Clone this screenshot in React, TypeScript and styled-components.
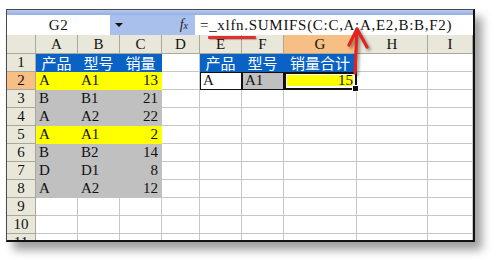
import React from 'react';
import styled, { createGlobalStyle, css } from 'styled-components';

const CELL_FONT = `"Liberation Serif", "Noto Sans CJK SC", serif`;

const COLS = ['A', 'B', 'C', 'D', 'E', 'F', 'G', 'H', 'I'];
const COL_WIDTHS = [42, 42, 42, 38, 42, 42, 73, 71, 45];
const ACTIVE_COL = 'G';
const ACTIVE_ROW = 2;

type Fill = 'blue' | 'yellow' | 'gray' | 'white' | 'none';
type Align = 'left' | 'center' | 'right';

type CellData = {
	text?: string;
	fill?: Fill;
	align?: Align;
	boxed?: boolean;
	active?: boolean;
};

const head = (text: string): CellData => ({ text, fill: 'blue', align: 'center' });
const rec = (p: string, m: string, n: string, fill: Fill): CellData[] => [
	{ text: p, fill },
	{ text: m, fill },
	{ text: n, fill, align: 'right' },
];

const ROWS: CellData[][] = [
	[head('产品'), head('型号'), head('销量'), {}, head('产品'), head('型号'), head('销量合计')],
	[
		...rec('A', 'A1', '13', 'yellow'),
		{},
		{ text: 'A', fill: 'white', boxed: true },
		{ text: 'A1', fill: 'gray', boxed: true },
		{ text: '15', fill: 'yellow', align: 'right', active: true },
	],
	rec('B', 'B1', '21', 'gray'),
	rec('A', 'A2', '22', 'gray'),
	rec('A', 'A1', '2', 'yellow'),
	rec('B', 'B2', '14', 'gray'),
	rec('D', 'D1', '8', 'gray'),
	rec('A', 'A2', '12', 'gray'),
	[],
	[],
	[],
];

const FILLS: Record<Fill, string> = {
	blue: '#0a62c4',
	yellow: '#ffff00',
	gray: '#c0c0c0',
	white: '#ffffff',
	none: '#ffffff',
};

const GlobalStyle = createGlobalStyle`
	html, body {
		margin: 0;
		padding: 0;
		background: #ffffff;
	}
`;

const Stage = styled.div`
	position: relative;
	width: 496px;
	height: 260px;
	padding: 9px 0 0 6px;
	box-sizing: border-box;
	overflow: hidden;
`;

const Window = styled.div`
	width: 469px;
	height: 233px;
	box-sizing: border-box;
	border-top: 1px solid #4a4a4a;
	border-left: 1px solid #4a4a4a;
	border-right: 2px solid #111111;
	border-bottom: 2px solid #111111;
	background: #ffffff;
	overflow: hidden;
	box-shadow: 7px 8px 9px rgba(0, 0, 0, 0.38);
	display: flex;
	flex-direction: column;
`;

const ToolStrip = styled.div`
	height: 5px;
	flex: none;
	background: linear-gradient(#b7c9ee, #94afe2);
`;

const FormulaBar = styled.div`
	height: 20px;
	flex: none;
	display: flex;
	align-items: stretch;
	font-family: ${CELL_FONT};
	font-size: 15px;
	color: #111111;
`;

const NameBox = styled.div`
	width: 103px;
	display: flex;
	align-items: center;
	justify-content: center;
	letter-spacing: 0.5px;
	background: #ffffff;
`;

const ButtonStrip = styled.div`
	width: 85px;
	display: flex;
	align-items: center;
	justify-content: space-between;
	padding: 0 7px 0 5px;
	box-sizing: border-box;
	background: #aac0ec;
`;

const DropArrow = styled.span`
	width: 0;
	height: 0;
	border-left: 4px solid transparent;
	border-right: 4px solid transparent;
	border-top: 4px solid #111111;
`;

const FxLabel = styled.span`
	font-style: italic;
	font-size: 14px;
	color: #222222;

	small {
		font-size: 10px;
	}
`;

const FormulaInput = styled.div`
	flex: 1;
	display: flex;
	align-items: center;
	padding-left: 5px;
	letter-spacing: 0.7px;
	background: #ffffff;
	white-space: nowrap;
`;

const Sheet = styled.div`
	flex: 1;
	display: grid;
	grid-template-columns: 29px ${COL_WIDTHS.map(w => `${w}px`).join(' ')};
	grid-template-rows: 19px;
	grid-auto-rows: 18px;
	font-family: ${CELL_FONT};
	font-size: 15px;
	color: #111111;
`;

const HeaderCell = styled.div<{ $selected?: boolean }>`
	display: flex;
	align-items: center;
	justify-content: center;
	box-sizing: border-box;
	border-right: 1px solid #a9a89c;
	border-bottom: 1px solid #a9a89c;
	background: ${p => (p.$selected ? '#f7bf84' : '#e8e7da')};
	white-space: nowrap;
	overflow: hidden;
`;

const Cell = styled.div<{ $fill: Fill; $align: Align; $boxed?: boolean; $active?: boolean }>`
	position: relative;
	display: flex;
	align-items: center;
	justify-content: ${p => (p.$align === 'left' ? 'flex-start' : p.$align === 'right' ? 'flex-end' : 'center')};
	padding: 0 3px;
	box-sizing: border-box;
	background: ${p => FILLS[p.$fill]};
	color: ${p => (p.$fill === 'blue' ? '#ffffff' : '#111111')};
	border-right: 1px solid ${p => (p.$fill === 'none' ? '#c6c6c6' : FILLS[p.$fill])};
	border-bottom: 1px solid ${p => (p.$fill === 'none' ? '#c6c6c6' : FILLS[p.$fill])};
	white-space: nowrap;

	${p => p.$boxed && css`
		outline: 1px solid #111111;
		outline-offset: -1px;
	`}

	${p => p.$active && css`
		outline: 2px solid #111111;
		outline-offset: -2px;
		box-shadow: inset 0 0 0 3px #ffffff;

		&::after {
			content: '';
			position: absolute;
			right: -3px;
			bottom: -3px;
			width: 5px;
			height: 5px;
			background: #111111;
			border: 1px solid #ffffff;
			z-index: 2;
		}
	`}
`;

const Underline = styled.div`
	position: absolute;
	left: 208px;
	top: 36px;
	width: 48px;
	height: 3px;
	border-radius: 1px;
	background: #e2302b;
	box-shadow: 1px 1px 1px rgba(0, 0, 0, 0.25);
`;

const ArrowMark = styled.svg`
	position: absolute;
	left: 340px;
	top: 22px;
	overflow: visible;
	filter: drop-shadow(2px 2px 1.5px rgba(0, 0, 0, 0.4));
`;

const App: React.FC = () => {
	return (
		<>
			<GlobalStyle />
			<Stage>
				<Window>
					<ToolStrip />
					<FormulaBar>
						<NameBox>G2</NameBox>
						<ButtonStrip>
							<DropArrow />
							<FxLabel>f<small>x</small></FxLabel>
						</ButtonStrip>
						<FormulaInput>=_xlfn.SUMIFS(C:C,A:A,E2,B:B,F2)</FormulaInput>
					</FormulaBar>
					<Sheet>
						<HeaderCell />
						{COLS.map(c => (
							<HeaderCell key={c} $selected={c === ACTIVE_COL}>{c}</HeaderCell>
						))}
						{ROWS.map((row, r) => (
							<React.Fragment key={r}>
								<HeaderCell $selected={r + 1 === ACTIVE_ROW}>{r + 1}</HeaderCell>
								{COLS.map((c, i) => {
									const cell = row[i] || {};
									return (
										<Cell
											key={c}
											$fill={cell.fill || 'none'}
											$align={cell.align || 'left'}
											$boxed={cell.boxed}
											$active={cell.active}
										>
											{cell.text}
										</Cell>
									);
								})}
							</React.Fragment>
						))}
					</Sheet>
				</Window>
				<Underline />
				<ArrowMark width="40" height="60" viewBox="0 0 40 60">
					<g fill="none" stroke="#e2241f" strokeWidth="3.2" strokeLinecap="round" strokeLinejoin="round">
						<path d="M15 51 L17 7" />
						<path d="M9 23 L17 7 L27 25" />
					</g>
				</ArrowMark>
			</Stage>
		</>
	);
};

export default App;
